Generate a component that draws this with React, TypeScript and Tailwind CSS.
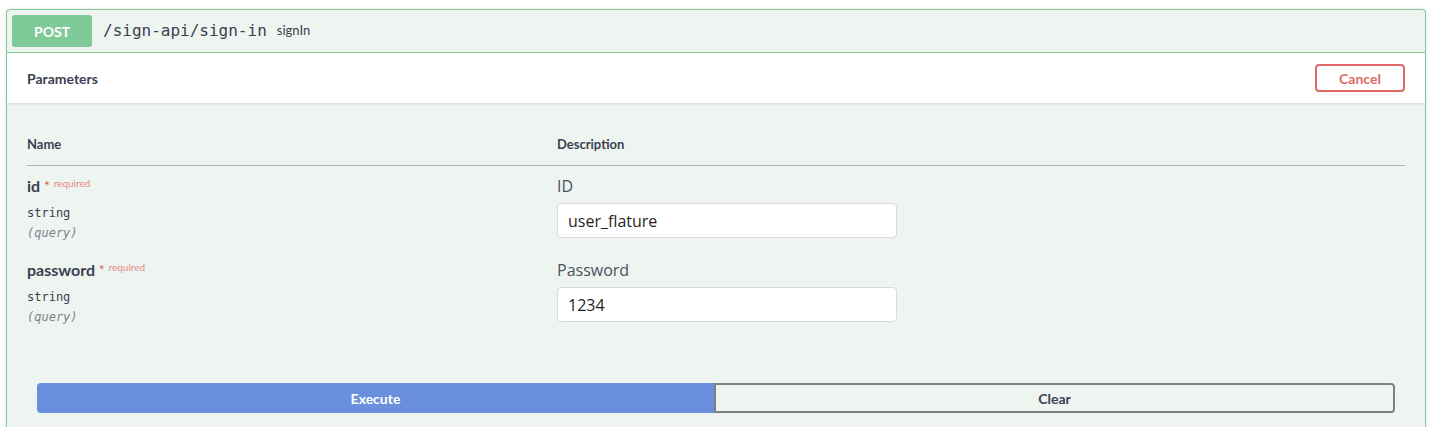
import React from "react";

const title = { fontFamily: "Lato, 'Open Sans', sans-serif" } as React.CSSProperties;
const open = { fontFamily: "'Open Sans', sans-serif" } as React.CSSProperties;
const mono = { fontFamily: "'DejaVu Sans Mono', 'Liberation Mono', monospace" } as React.CSSProperties;

function ParamRow({ name, label, value }: { name: string; label: string; value: string }) {
  return (
    <div className="flex pt-[9px] pb-[8px]">
      <div className="w-[530px] shrink-0">
        <div className="flex items-start h-[22px]" style={title}>
          <span className="text-[16px] leading-[22px] font-bold text-[#3b4151]">{name}</span>
          <span className="ml-[4px] text-[13px] leading-[16px] text-[#e0574f] mt-[3px]">*</span>
          <span className="ml-[4px] text-[10px] leading-[12px] text-[#e58a84] mt-[2px]">required</span>
        </div>
        <div className="mt-[7px] text-[12px] leading-[18px] text-[#3b4151]" style={mono}>string</div>
        <div className="mt-[2px] text-[12px] leading-[18px] italic text-[#7d8290]" style={mono}>(query)</div>
      </div>
      <div className="flex-1">
        <div className="text-[16px] leading-[22px] text-[#4b5060]" style={open}>{label}</div>
        <div className="mt-[6px] w-[340px] h-[35px] bg-white border border-[#d9d9d9] rounded-[4px] flex items-center px-[10px]">
          <span className="text-[16px] text-[#1f1f1f]" style={open}>{value}</span>
        </div>
      </div>
    </div>
  );
}

export default function App() {
  return (
    <div className="w-[1432px] h-[427px] bg-white overflow-hidden pt-[9px]">
      <div className="ml-[6px] w-[1420px] h-[440px] border border-[#80cc9a] rounded-[4px] bg-[#eef4f0] shadow-[0_0_3px_rgba(0,0,0,0.15)]">
        {/* header */}
        <div className="flex items-center p-[5px] border-b border-[#80cc9a]">
          <div className="w-[80px] h-[32px] rounded-[3px] bg-[#7fca98] flex items-center justify-center text-white text-[14px] font-bold" style={title}>
            POST
          </div>
          <span className="ml-[11px] text-[16px] text-[#3b4151]" style={mono}>/sign-api/sign-in</span>
          <span className="ml-[10px] text-[13px] text-[#3b4151]" style={title}>signIn</span>
        </div>
        {/* parameters header */}
        <div className="h-[50px] bg-white flex items-center justify-between pl-[20px] pr-[20px] shadow-[0_1px_2px_rgba(0,0,0,0.1)]">
          <span className="text-[14px] font-bold text-[#3b4151]" style={title}>Parameters</span>
          <div className="w-[90px] h-[28px] border-2 border-[#e06a66] rounded-[4px] flex items-center justify-center text-[14px] font-bold text-[#e06a66]" style={title}>
            Cancel
          </div>
        </div>
        {/* table */}
        <div className="px-[20px] pt-[20px] pb-[20px]">
          <div className="flex py-[12px] border-b border-[#adb3af]" style={title}>
            <div className="w-[530px] text-[13px] leading-[18px] font-bold text-[#3b4151]">Name</div>
            <div className="text-[13px] leading-[18px] font-bold text-[#3b4151]">Description</div>
          </div>
          <ParamRow name="id" label="ID" value="user_flature" />
          <ParamRow name="password" label="Password" value="1234" />
        </div>
        {/* buttons */}
        <div className="flex px-[30px] pt-[29px]">
          <div className="flex-1 h-[30px] bg-[#6a8fdc] rounded-l-[4px] flex items-center justify-center text-white text-[14px] font-bold" style={title}>
            Execute
          </div>
          <div className="flex-1 h-[30px] border-2 border-[#808080] rounded-r-[4px] flex items-center justify-center text-[#3b4151] text-[14px] font-bold" style={title}>
            Clear
          </div>
        </div>
      </div>
    </div>
  );
}
